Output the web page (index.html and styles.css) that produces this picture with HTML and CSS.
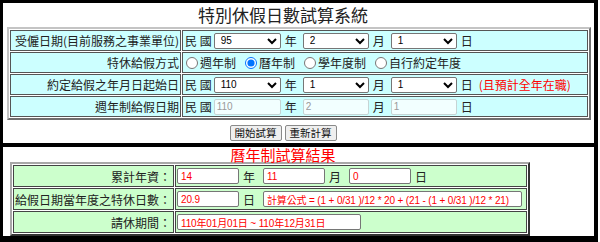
FILE: index.html
```html
<!DOCTYPE html>
<html lang="zh-Hant">
<head>
<meta charset="utf-8">
<title>特別休假日數試算系統</title>
<link rel="stylesheet" href="styles.css">
</head>
<body>
<div class="frame">
  <section class="calc">
    <h1 class="title">特別休假日數試算系統</h1>
    <table class="form-table">
      <tr>
        <td class="lbl">受僱日期(目前服務之事業單位)</td>
        <td class="val">
          <div class="line">
            <span class="minguo">民 國</span>
            <select class="sel w67"><option>95</option></select>
            <span class="unit">年</span>
            <select class="sel w66"><option>2</option></select>
            <span class="unit">月</span>
            <select class="sel w66"><option>1</option></select>
            <span class="unit">日</span>
          </div>
        </td>
      </tr>
      <tr>
        <td class="lbl">特休給假方式</td>
        <td class="val">
          <div class="line">
            <label class="radio first"><input type="radio" name="mode">週年制</label>
            <label class="radio"><input type="radio" name="mode" checked>曆年制</label>
            <label class="radio"><input type="radio" name="mode">學年度制</label>
            <label class="radio"><input type="radio" name="mode">自行約定年度</label>
          </div>
        </td>
      </tr>
      <tr>
        <td class="lbl">約定給假之年月日起始日</td>
        <td class="val">
          <div class="line">
            <span class="minguo">民 國</span>
            <select class="sel w67"><option>110</option></select>
            <span class="unit">年</span>
            <select class="sel w66"><option>1</option></select>
            <span class="unit">月</span>
            <select class="sel w66"><option>1</option></select>
            <span class="unit">日</span>
            <span class="note">(且預計全年在職)</span>
          </div>
        </td>
      </tr>
      <tr>
        <td class="lbl">週年制給假日期</td>
        <td class="val">
          <div class="line">
            <span class="minguo">民 國</span>
            <input class="dis w67" type="text" value="110" disabled>
            <span class="unit">年</span>
            <input class="dis w66" type="text" value="2" disabled>
            <span class="unit">月</span>
            <input class="dis w66" type="text" value="1" disabled>
            <span class="unit">日</span>
          </div>
        </td>
      </tr>
    </table>
    <div class="actions">
      <button class="btn" type="button">開始試算</button>
      <button class="btn" type="button">重新計算</button>
    </div>
  </section>
  <div class="divider"></div>
  <section class="result">
    <h2 class="result-title">曆年制試算結果</h2>
    <table class="result-table">
      <tr>
        <td class="lbl">累計年資：</td>
        <td class="val">
          <div class="line">
            <input class="out w62" type="text" value="14" readonly>
            <span class="runit">年</span>
            <input class="out w62" type="text" value="11" readonly>
            <span class="runit">月</span>
            <input class="out w62" type="text" value="0" readonly>
            <span class="runit">日</span>
          </div>
        </td>
      </tr>
      <tr>
        <td class="lbl">給假日期當年度之特休日數：</td>
        <td class="val">
          <div class="line">
            <input class="out w62" type="text" value="20.9" readonly>
            <span class="runit">日</span>
            <input class="out formula" type="text" value="計算公式 = (1 + 0/31 )/12 * 20 + (21 - (1 + 0/31 )/12 * 21)" readonly>
          </div>
        </td>
      </tr>
      <tr>
        <td class="lbl">請休期間：</td>
        <td class="val">
          <div class="line">
            <input class="out period" type="text" value="110年01月01日 ~ 110年12月31日" readonly>
          </div>
        </td>
      </tr>
    </table>
  </section>
</div>
</body>
</html>
```
FILE: styles.css
```css
* { box-sizing: border-box; }
html, body { margin: 0; padding: 0; background: #fff; }
body {
  font-family: "Noto Sans CJK TC", "Noto Sans CJK SC", sans-serif;
  font-size: 12px;
  color: #222;
}
.frame {
  width: 598px;
  border-style: solid;
  border-color: #000;
  border-width: 3px 4px 7px 3px;
}
.title {
  margin: 0;
  height: 24px;
  line-height: 24px;
  font-size: 17px;
  font-weight: normal;
  text-align: center;
  padding-right: 31px;
  color: #222;
}
.form-table {
  width: 584px;
  margin: 0 4px;
  border-collapse: separate;
  border-spacing: 1px;
  border: 2px solid;
  border-color: #c4c4c4 #707070 #707070 #c4c4c4;
  background: #fff;
}
.form-table td {
  height: 21px;
  padding: 0 1px;
  border: 1px solid #555;
  background: #ccffff;
  vertical-align: middle;
}
.form-table td.lbl { width: 171px; text-align: right; }
.form-table td.val { padding-left: 2px; }
.line {
  display: flex;
  align-items: center;
  white-space: nowrap;
}
.minguo { margin-right: 2px; }
.sel {
  height: 16px;
  padding: 0 0 0 2px;
  margin: 0;
  font: 10px "Liberation Sans", Arial, sans-serif;
  color: #000;
  border: 1px solid #767676;
  border-radius: 2px;
  background-color: #fff;
}
.w67 { width: 67px; }
.w66 { width: 66px; }
.w62 { width: 62px; }
.unit { margin: 0 6px 0 4px; }
.note { color: #f00; }
.dis {
  height: 16px;
  padding: 0 2px;
  margin: 0;
  font: 10px "Liberation Sans", Arial, sans-serif;
  color: #9a9a9a;
  border: 1px solid #c6d4d4;
  border-radius: 2px;
  background: #f2ffff;
}
.radio {
  display: inline-flex;
  align-items: center;
  margin-right: 9px;
}
.radio input {
  width: 12px;
  height: 12px;
  margin: 0 2px 0 0;
}
.radio.first input { margin-left: 1px; }
.actions {
  display: flex;
  justify-content: center;
  gap: 3px;
  height: 23px;
  padding: 5px 31px 0 0;
}
.btn {
  height: 16px;
  padding: 0 4px;
  margin: 0;
  font: 10.5px/14px "Noto Sans CJK TC", sans-serif;
  color: #111;
  border: 1px solid #8a8a8a;
  border-radius: 2px;
  background: #efefef;
}
.divider { height: 4px; background: #000; }
.result-title {
  margin: 0;
  height: 15px;
  line-height: 15px;
  font-size: 15px;
  font-weight: normal;
  color: #f00;
  text-align: center;
  padding-right: 31px;
}
.result-table {
  width: 520px;
  margin-left: 7px;
  border-collapse: separate;
  border-spacing: 1px;
  border: 2px solid;
  border-color: #a8a8a8 #333 #333 #a8a8a8;
  background: #fff;
}
.result-table td {
  height: 22px;
  padding: 0 1px;
  border: 1px solid #444;
  background: #ccffcc;
  vertical-align: middle;
}
.result-table td.lbl { width: 161px; text-align: right; padding-right: 2px; color: #222; }
.out {
  height: 16px;
  padding: 0 3px;
  margin: 0;
  font: 10px "Liberation Sans", Arial, "Noto Sans CJK TC", sans-serif;
  letter-spacing: -0.15px;
  color: #f00;
  border: 1px solid #767676;
  border-radius: 2px;
  background: #fff;
}
.runit { margin: 0 8px 0 4px; }
.formula { width: 259px; }
.period { width: 184px; }
```
